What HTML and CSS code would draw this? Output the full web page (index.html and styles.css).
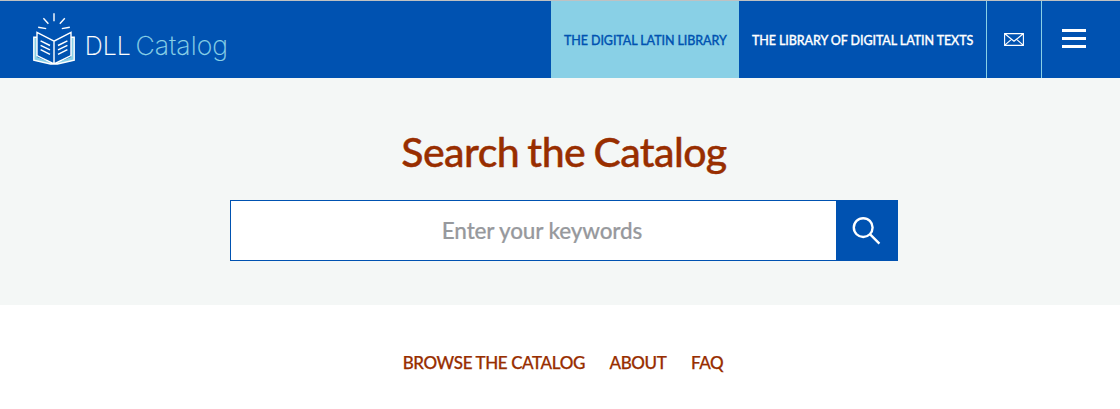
FILE: index.html
```html
<!DOCTYPE html>
<html lang="en">
<head>
<meta charset="utf-8">
<title>DLL Catalog</title>
<link rel="stylesheet" href="styles.css">
</head>
<body>
<header class="header">
  <a class="logo" aria-label="DLL Catalog">
    <svg class="logo-art" width="200" height="60" viewBox="30 9 200 60">
      <path class="book-pages" d="M33.8 37.6H37V57L53.8 63.8 71 57V37.6h3.2V60.5L57 64h-6L33.8 60.5Z"/>
      <path class="book-line" d="M36.8 37.2h-3v23L50.5 64h7L74.2 60.2V37.2h-3M54 41.2 37 32.3V55.6L54 64 71 55.6V32.3ZM54 41.2V64M54 13.3v8M43.4 18.3l5 5.5M64.8 18.3l-5 5.5M38.2 27.3l8 1.3M69.8 27.3l-8 1.3"/>
      <path class="book-text" d="M40.6 40.9 50 45.5M40.6 45.3 50 49.9M40.6 49.7 50 54.3M58 45.5 67.4 40.9M58 49.9 67.4 45.3M58 54.3 67.4 49.7"/>
      <text class="logo-text" x="84.8" y="55.2" textLength="46" lengthAdjust="spacingAndGlyphs">DLL</text>
      <text class="logo-text logo-text-blue" x="135.4" y="55.2" textLength="92.6" lengthAdjust="spacingAndGlyphs">Catalog</text>
    </svg>
  </a>
  <nav class="nav">
    <a class="nav-link nav-active">THE DIGITAL LATIN LIBRARY</a>
    <a class="nav-link nav-texts">THE LIBRARY OF DIGITAL LATIN TEXTS</a>
    <a class="nav-mail" aria-label="Contact">
      <svg width="20" height="13" viewBox="0 0 20 13"><path class="mail-line" d="M.6.6h18.8v11.8H.6ZM.8.8 10 8.3 19.2.8M.8 12.2 7.4 6.3M19.2 12.2 12.6 6.3"/></svg>
    </a>
    <button class="nav-menu" aria-label="Menu"><span class="bar"></span><span class="bar"></span><span class="bar"></span></button>
  </nav>
</header>
<main>
  <section class="hero">
    <h1 class="title">Search the Catalog</h1>
    <form class="search">
      <input class="search-input" type="text" placeholder="Enter your keywords" aria-label="Keywords">
      <button class="search-button" type="button" aria-label="Search">
        <svg width="28" height="28" viewBox="0 0 28 28"><path class="search-line" d="M20.6 10.6a9.4 9.4 0 1 1-18.8 0 9.4 9.4 0 0 1 18.8 0ZM17.9 17.2 27.4 26.6"/></svg>
      </button>
    </form>
  </section>
  <nav class="links">
    <a>BROWSE THE CATALOG</a>
    <a>ABOUT</a>
    <a>FAQ</a>
  </nav>
</main>
</body>
</html>
```
FILE: styles.css
```css
* { box-sizing: border-box; }
body { margin: 0; background: #fff; font-family: Lato, sans-serif; font-weight: 500; overflow: hidden; }
button { border: 0; padding: 0; background: none; }
svg { display: block; fill: none; overflow: visible; }

.header { display: flex; justify-content: space-between; height: 78px; border-top: 1px solid #bfc1c2; background: #0052b1; }
.logo { padding: 8px 0 0 30px; }
.book-pages { fill: #89d0e6; }
.book-line { stroke: #fff; stroke-width: 1.4; }
.book-text { stroke: #fff; stroke-width: 1.5; }
.logo-text { font-family: Inter, sans-serif; font-size: 26px; font-weight: 200; fill: #fff; stroke: #fff; stroke-width: 0.15; }
.logo-text-blue { fill: #89d0e6; stroke: #89d0e6; }

.nav { display: flex; }
.nav-link { display: flex; align-items: center; padding: 1px 0 0 13px; color: #fff; font-size: 12.5px; letter-spacing: -0.09px; white-space: nowrap; -webkit-text-stroke: 0.3px currentColor; }
.nav-active { width: 188px; background: #89d0e6; color: #0052b1; }
.nav-texts { width: 247px; }
.nav-mail { display: flex; align-items: center; justify-content: center; width: 56px; border: solid #89d0e6; border-width: 0 1px; }
.mail-line { stroke: #fff; stroke-width: 1.1; }
.nav-menu { display: flex; flex-direction: column; gap: 5px; width: 78px; padding: 28px 0 0 20px; }
.bar { width: 24px; height: 3px; background: #fff; }

.hero { display: flex; flex-direction: column; align-items: center; height: 227px; padding: 49px 0 0 8px; background: #f4f7f6; }
.title { margin: 0; color: #982e00; font-size: 41px; line-height: 50px; font-weight: 500; letter-spacing: -0.57px; word-spacing: -1.5px; white-space: nowrap; -webkit-text-stroke: 0.4px currentColor; }
.search { display: flex; width: 668px; height: 61px; margin-top: 23px; }
.search-input { width: 606px; border: 1px solid #0052b1; border-right: 0; padding: 0 0 1px 17px; background: #fff; font: 500 22.5px Lato, sans-serif; letter-spacing: -0.14px; text-align: center; }
.search-input::placeholder { color: #97999d; opacity: 1; -webkit-text-stroke: 0.2px currentColor; }
.search-button { width: 62px; padding: 0 0 0 16px; background: #0052b1; }
.search-line { stroke: #fff; stroke-width: 2.4; }

.links { display: flex; justify-content: center; gap: 24.5px; padding: 47px 0 0 6px; color: #982e00; font-size: 17px; line-height: 22px; letter-spacing: -0.38px; -webkit-text-stroke: 0.25px currentColor; }
```
